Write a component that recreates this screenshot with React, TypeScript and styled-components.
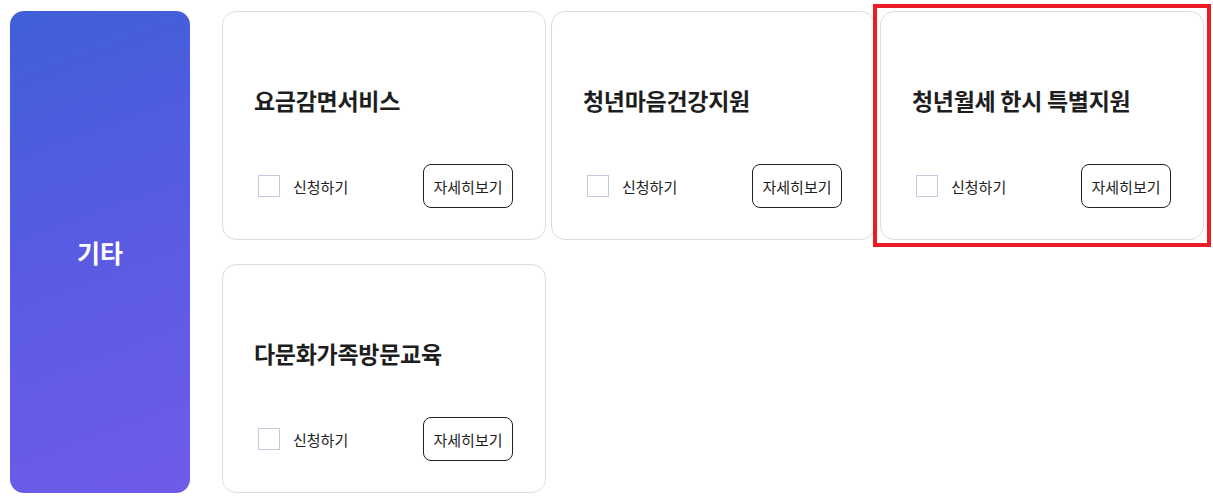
import React from 'react';
import styled, { createGlobalStyle } from 'styled-components';

const GlobalStyle = createGlobalStyle`
  html, body {
    margin: 0;
    padding: 0;
    background: #ffffff;
  }
  body {
    font-family: "Noto Sans CJK KR", "Noto Sans", sans-serif;
    color: #222222;
  }
`;

const Page = styled.div`
  display: flex;
  gap: 32px;
  padding: 11px 10px;
`;

const Category = styled.div`
  width: 180px;
  height: 482px;
  flex-shrink: 0;
  border-radius: 14px;
  background: linear-gradient(160deg, #3f5fd8 0%, #5a5be2 50%, #6f5ce9 100%);
  display: flex;
  align-items: center;
  justify-content: center;
  color: #ffffff;
  font-size: 25px;
  font-weight: 700;
`;

const Grid = styled.div`
  display: grid;
  grid-template-columns: repeat(3, 324px);
  grid-auto-rows: 229px;
  column-gap: 5px;
  row-gap: 24px;
`;

const Card = styled.div<{ $active?: boolean }>`
  position: relative;
  box-sizing: border-box;
  border: 1px solid #dedede;
  border-radius: 14px;
  background: #ffffff;
  padding: 73px 32px 31px 31px;
  display: flex;
  flex-direction: column;
  justify-content: space-between;

  &::after {
    content: '';
    display: ${(p) => (p.$active ? 'block' : 'none')};
    position: absolute;
    inset: -8px;
    border: 4px solid #ec1c24;
    pointer-events: none;
  }
`;

const Title = styled.h3`
  margin: 0;
  font-size: 23px;
  line-height: 30px;
  font-weight: 700;
  color: #1e1e1e;
  letter-spacing: -0.3px;
`;

const Actions = styled.div`
  display: flex;
  align-items: center;
  justify-content: space-between;
  padding-left: 1px;
`;

const Apply = styled.label`
  display: flex;
  align-items: center;
  gap: 13px;
  padding-left: 3px;
  font-size: 15px;
  color: #222222;
  cursor: pointer;
`;

const Box = styled.span`
  box-sizing: border-box;
  width: 22px;
  height: 22px;
  border: 1px solid #c5cbdf;
  background: #ffffff;
`;

const DetailButton = styled.button`
  box-sizing: border-box;
  width: 90px;
  height: 44px;
  border: 1px solid #222222;
  border-radius: 8px;
  background: #ffffff;
  font-family: inherit;
  font-size: 15px;
  color: #1e1e1e;
  padding: 0;
  cursor: pointer;
`;

const services = [
  { name: '요금감면서비스' },
  { name: '청년마음건강지원' },
  { name: '청년월세 한시 특별지원', active: true },
  { name: '다문화가족방문교육' },
];

export default function App() {
  return (
    <>
      <GlobalStyle />
      <Page>
        <Category>기타</Category>
        <Grid>
          {services.map((s) => (
            <Card key={s.name} $active={s.active}>
              <Title>{s.name}</Title>
              <Actions>
                <Apply>
                  <Box />
                  신청하기
                </Apply>
                <DetailButton>자세히보기</DetailButton>
              </Actions>
            </Card>
          ))}
        </Grid>
      </Page>
    </>
  );
}
